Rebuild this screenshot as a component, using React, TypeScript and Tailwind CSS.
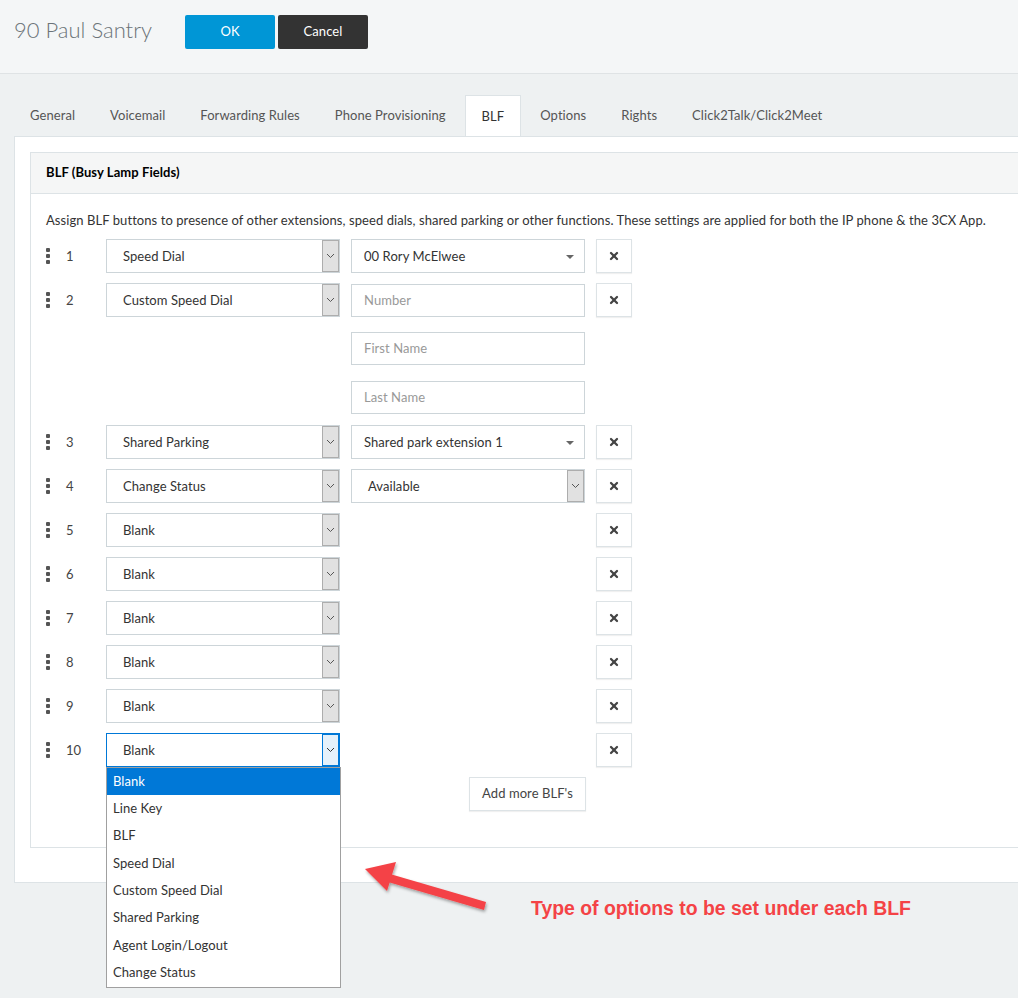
import { X } from 'lucide-react';

const tabs = ['General', 'Voicemail', 'Forwarding Rules', 'Phone Provisioning', 'BLF', 'Options', 'Rights', 'Click2Talk/Click2Meet'];

const options = ['Blank', 'Line Key', 'BLF', 'Speed Dial', 'Custom Speed Dial', 'Shared Parking', 'Agent Login/Logout', 'Change Status'];

type Row = {
  n: number;
  type: string;
  second?: 'contact' | 'number' | 'native';
  value?: string;
  open?: boolean;
};

const rows: Row[] = [
  { n: 1, type: 'Speed Dial', second: 'contact', value: '00 Rory McElwee' },
  { n: 2, type: 'Custom Speed Dial', second: 'number' },
  { n: 3, type: 'Shared Parking', second: 'contact', value: 'Shared park extension 1' },
  { n: 4, type: 'Change Status', second: 'native', value: 'Available' },
  { n: 5, type: 'Blank' },
  { n: 6, type: 'Blank' },
  { n: 7, type: 'Blank' },
  { n: 8, type: 'Blank' },
  { n: 9, type: 'Blank' },
  { n: 10, type: 'Blank', open: true },
];

function Chevron({ blue }: { blue?: boolean }) {
  return (
    <svg width="9" height="6" viewBox="0 0 9 6" className={blue ? 'text-[#333]' : 'text-[#555]'}>
      <path d="M1 1 L4.5 4.5 L8 1" fill="none" stroke="currentColor" strokeWidth="1" />
    </svg>
  );
}

function NativeSelect({ label, open, width = 'w-[234px]', pad = 'pl-[16px]' }: { label: string; open?: boolean; width?: string; pad?: string }) {
  return (
    <div className={`relative ${width} h-[34px]`}>
      <div
        className={`flex h-full items-stretch bg-white border ${
          open ? 'border-[#0078d7]' : 'border-[#cdd5d9]'
        }`}
      >
        <div className={`flex-1 flex items-center pt-[1px] ${pad} text-[13px] text-[#333]`}>{label}</div>
        <div
          className={`w-[17px] flex items-center justify-center border ${
            open ? 'bg-[#e5f1fb] border-[#0078d7]' : 'bg-[#e1e1e1] border-[#adadad]'
          }`}
        >
          <Chevron blue={open} />
        </div>
      </div>
      {open && (
        <div className="absolute left-0 top-full z-10 w-[235px] bg-white border border-[#a0a0a0] pb-[1px]">
          {options.map((o, i) => (
            <div
              key={o}
              className={`h-[27.3px] flex items-center px-[6px] text-[13px] ${
                i === 0 ? 'bg-[#0078d7] text-white' : 'text-[#333]'
              }`}
            >
              {o}
            </div>
          ))}
        </div>
      )}
    </div>
  );
}

function TextInput({ placeholder }: { placeholder: string }) {
  return (
    <div className="w-[234px] h-[33px] border border-[#cdd5d9] bg-white flex items-center pt-[1px] pl-[12px] text-[13px] text-[#999]">
      {placeholder}
    </div>
  );
}

function RemoveButton() {
  return (
    <button className="w-[36px] h-[34px] bg-white border border-[#dde3e6] shadow-[0_1px_1px_rgba(0,0,0,0.06)] flex items-center justify-center">
      <X className="w-[12px] h-[12px] text-[#444]" strokeWidth={4.5} />
    </button>
  );
}

function Handle() {
  return (
    <div className="flex flex-col gap-[2px] w-[4px]">
      <div className="w-[4px] h-[4px] rounded-[1px] bg-[#555]" />
      <div className="w-[4px] h-[4px] rounded-[1px] bg-[#555]" />
      <div className="w-[4px] h-[4px] rounded-[1px] bg-[#555]" />
    </div>
  );
}

function BlfRow({ row }: { row: Row }) {
  return (
    <div className={row.n === 2 ? 'mb-[11px]' : 'mb-[10px]'}>
      <div className="flex items-center h-[34px]">
        <Handle />
        <div className="w-[56px] pl-[16px] pt-[1px] text-[13px] text-[#444]">{row.n}</div>
        <NativeSelect label={row.type} open={row.open} />
        <div className="w-[234px] ml-[11px]">
          {row.second === 'contact' && (
            <div className="w-[234px] h-[34px] border border-[#cdd5d9] bg-white flex items-center pt-[1px] pl-[12px] pr-[10px] text-[13px] text-[#333]">
              <span className="flex-1">{row.value}</span>
              <span className="w-0 h-0 border-l-[4px] border-r-[4px] border-t-[4px] border-l-transparent border-r-transparent border-t-[#666]" />
            </div>
          )}
          {row.second === 'number' && <TextInput placeholder="Number" />}
          {row.second === 'native' && <NativeSelect label={row.value || ''} pad="pl-[16px]" />}
        </div>
        <div className="ml-[11px]">
          <RemoveButton />
        </div>
      </div>
      {row.second === 'number' && (
        <div className="pl-[305px]">
          <div className="mt-[15px]">
            <TextInput placeholder="First Name" />
          </div>
          <div className="mt-[16px]">
            <TextInput placeholder="Last Name" />
          </div>
        </div>
      )}
    </div>
  );
}

export default function App() {
  return (
    <div className="relative w-[1018px] h-[998px] overflow-hidden bg-[#eef1f2] font-[family-name:Lato,sans-serif] tracking-[0.07px] text-[#333]">
      {/* Header */}
      <div className="h-[74px] bg-[#f4f6f7] border-b border-[#dfe3e5] flex items-start pl-[14px] pt-[15px]">
        <h1 className="text-[22px] leading-[30px] font-light text-[#6b7378] w-[171px] tracking-normal">90 Paul Santry</h1>
        <button className="w-[90px] h-[34px] bg-[#0096d6] text-white text-[13px] rounded-[2px]">OK</button>
        <button className="ml-[3px] w-[90px] h-[34px] bg-[#333] text-white text-[13px] rounded-[2px]">Cancel</button>
      </div>

      {/* Tabs */}
      <div className="pt-[21px] pl-[14px] flex">
        {tabs.map((t) => (
          <div
            key={t}
            className={`h-[41px] px-[16px] mr-[3px] pt-[1px] flex items-center text-[13px] ${
              t === 'BLF'
                ? 'bg-white border border-b-0 border-[#dde3e6] text-[#333] -mb-[1px] relative z-10'
                : 'text-[#555]'
            }`}
          >
            {t}
          </div>
        ))}
      </div>

      {/* Content panel */}
      <div className="ml-[14px] h-[747px] bg-white border border-r-0 border-[#dde3e6] pt-[15px] pl-[15px]">
        <div className="h-[696px] border border-r-0 border-[#dde3e6]">
          <div className="h-[41px] bg-[#f5f6f6] border-b border-[#dde3e6] flex items-center pl-[15px] text-[13px] font-bold text-black">
            BLF (Busy Lamp Fields)
          </div>
          <div className="pl-[15px] pt-[17px]">
            <p className="text-[13px] text-[#333] leading-[18px] whitespace-nowrap">
              Assign BLF buttons to presence of other extensions, speed dials, shared parking or other functions. These settings are applied for both the IP phone &amp; the 3CX App.
            </p>
            <div className="mt-[10px]">
              {rows.map((r) => (
                <BlfRow key={r.n} row={r} />
              ))}
            </div>
            <div className="pl-[423px]">
              <button className="w-[117px] h-[34px] bg-white border border-[#dde3e6] shadow-[0_1px_1px_rgba(0,0,0,0.06)] text-[13px] text-[#444]">
                Add more BLF's
              </button>
            </div>
          </div>
        </div>
      </div>

      {/* Annotation */}
      <svg className="absolute left-[355px] top-[850px]" width="150" height="70" viewBox="355 850 150 70">
        <defs>
          <filter id="sh" x="-20%" y="-20%" width="140%" height="160%">
            <feDropShadow dx="1" dy="2" stdDeviation="1.5" floodColor="#000" floodOpacity="0.35" />
          </filter>
        </defs>
        <g filter="url(#sh)" fill="#f44346">
          <path d="M486 902 L390 874 L388 882 L484 910 Z" />
          <path d="M365 869 L396 862 L387 891 Z" />
        </g>
      </svg>
      <div className="absolute left-[531px] top-[896px] text-[19.4px] leading-[24px] tracking-normal font-bold text-[#f44346] font-[family-name:Liberation_Sans,Arial,sans-serif]">
        Type of options to be set under each BLF
      </div>
    </div>
  );
}
